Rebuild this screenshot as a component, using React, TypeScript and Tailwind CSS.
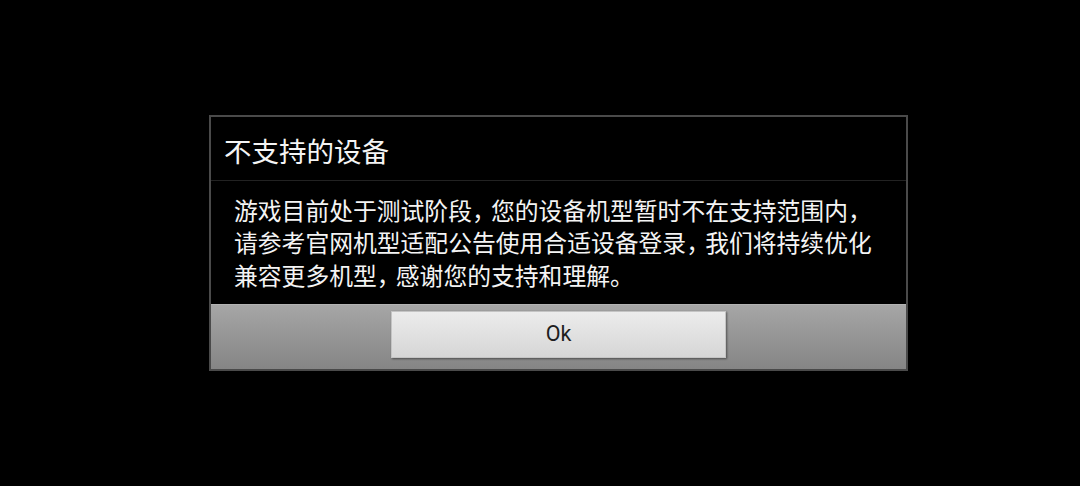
const cjk = { fontFamily: '"Noto Sans CJK SC", "Noto Sans", sans-serif' };

function Comma() {
  return <span className="tracking-[-0.2em]">，</span>;
}

export default function App() {
  return (
    <div className="w-[1080px] h-[486px] bg-black flex items-center" style={cjk}>
      <div className="ml-[209px] w-[699px] border-2 border-[#4a4a4a] flex flex-col bg-black">
        <div className="h-[63px] flex items-center pl-[13px] pt-[5px] text-[27.5px] text-[#f4f4f4]">
          不支持的设备
        </div>
        <div className="h-px bg-[#222222]" />
        <div className="h-[123px] flex items-center px-[23px] text-[23.8px] leading-[32.5px] text-[#f4f4f4]">
          <p>
            游戏目前处于测试阶段<Comma />您的设备机型暂时不在支持范围内<Comma />
            <br />
            请参考官网机型适配公告使用合适设备登录<Comma />我们将持续优化
            <br />
            兼容更多机型<Comma />感谢您的支持和理解。
          </p>
        </div>
        <div className="h-[65px] border-t border-[#b3b3b3] bg-gradient-to-b from-[#a6a6a6] to-[#858585] flex justify-center pt-[6px]">
          <button
            className="w-[335px] h-[47px] bg-gradient-to-b from-[#ececec] to-[#d6d6d6] border border-[#c4c4c4] shadow-[1px_1px_2px_rgba(0,0,0,0.45)] flex items-center justify-center text-[21.5px] text-[#1e1e1e]"
            style={{ fontFamily: 'Roboto, "Noto Sans", sans-serif' }}
          >
            Ok
          </button>
        </div>
      </div>
    </div>
  );
}
